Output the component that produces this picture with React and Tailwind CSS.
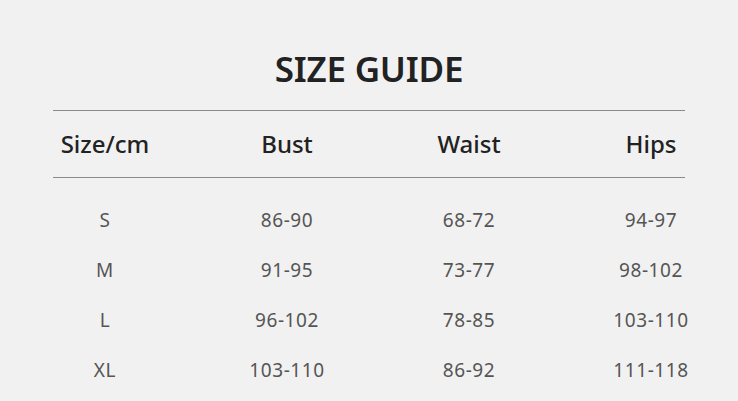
const headers = ['Size/cm', 'Bust', 'Waist', 'Hips'];

const rows = [
  ['S', '86-90', '68-72', '94-97'],
  ['M', '91-95', '73-77', '98-102'],
  ['L', '96-102', '78-85', '103-110'],
  ['XL', '103-110', '86-92', '111-118'],
];

const SizeGuide = () => {
  return (
    <div className="w-[738px] h-[401px] bg-[#f1f1f1] overflow-hidden font-['Noto_Sans',sans-serif]">
      {/* Title */}
      <h1 className="pt-[45px] text-center text-[35px] leading-[47px] font-semibold text-[#222] tracking-[-0.2px]">
        SIZE GUIDE
      </h1>

      {/* Table */}
      <div className="w-[728px] ml-[14px] mt-[18px]">
        <div className="ml-[39px] mr-[57px] border-t border-[#8a8a8a]" />
        <div className="grid grid-cols-4 h-[66px] items-center text-[24px] font-medium text-[#222]">
          {headers.map((h) => (
            <div key={h} className="text-center">
              {h}
            </div>
          ))}
        </div>
        <div className="ml-[39px] mr-[57px] border-t border-[#8a8a8a]" />

        <div className="pt-[17px]">
          {rows.map((r) => (
            <div key={r[0]} className="grid grid-cols-4 h-[50px] items-center text-[19px] text-[#555] tracking-[0.6px]">
              {r.map((c, i) => (
                <div key={i} className="text-center">
                  {c}
                </div>
              ))}
            </div>
          ))}
        </div>
      </div>
    </div>
  );
};

export default function App() {
  return <SizeGuide />;
}
